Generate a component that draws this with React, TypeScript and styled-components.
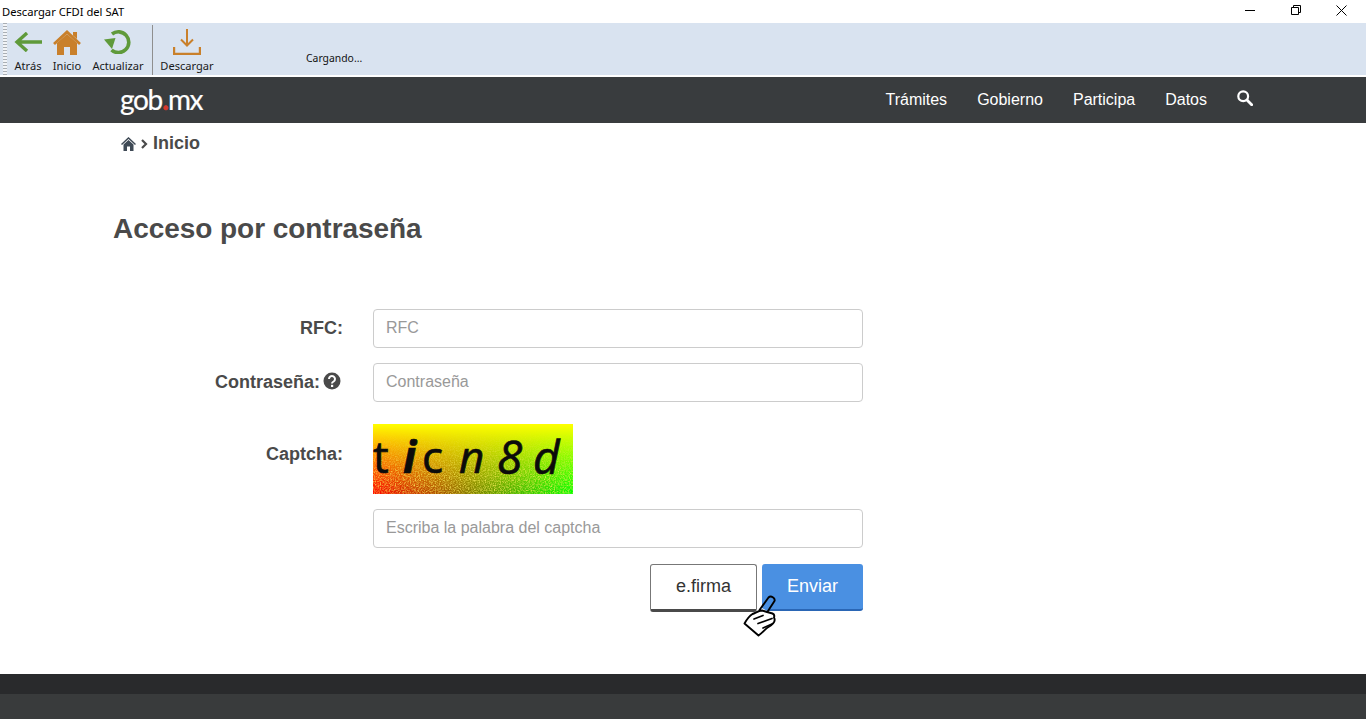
import React from "react";
import styled, { createGlobalStyle } from "styled-components";

const Global = createGlobalStyle`
  html, body { margin: 0; padding: 0; background: #fff; height: 100%; overflow: hidden; }
  #root { height: 719px; }
  * { box-sizing: border-box; }
`;

const Page = styled.div`
  width: 1366px;
  height: 719px;
  display: flex;
  flex-direction: column;
  font-family: "Liberation Sans", Arial, sans-serif;
  color: #4a4a4a;
  position: relative;
  overflow: hidden;
`;

const TitleBar = styled.div`
  height: 23px;
  flex: none;
  display: flex;
  align-items: center;
  justify-content: space-between;
  padding: 0 2px 0 2px;
  background: #fff;
`;
const TitleText = styled.span`
  font-family: "Noto Sans", "Open Sans", sans-serif;
  font-size: 11.2px;
  color: #000;
`;
const WinButtons = styled.div`
  display: flex;
  height: 23px;
`;
const WinButton = styled.div`
  width: 45.5px;
  height: 20px;
  display: flex;
  align-items: center;
  justify-content: center;
`;

const ToolBar = styled.div`
  height: 52px;
  flex: none;
  background: #d9e3f0;
  display: flex;
  padding-left: 3px;
`;
const Grip = styled.div`
  width: 4px;
  height: 52px;
  flex: none;
  background-image: repeating-linear-gradient(to bottom, #a9aeb4 0 1px, #f2f4f7 1px 3px);
`;
const ToolGroup = styled.div`
  display: flex;
  height: 52px;
`;
const ToolButton = styled.div<{ $w: number }>`
  width: ${(p) => p.$w}px;
  height: 52px;
  display: flex;
  flex-direction: column;
  align-items: center;
  padding-top: 5px;
`;
const ToolIcon = styled.div`
  height: 28px;
  display: flex;
  align-items: center;
  justify-content: center;
`;
const ToolLabel = styled.span`
  font-family: "Noto Sans", "Open Sans", sans-serif;
  font-size: 11.1px;
  line-height: 14px;
  color: #1a1a1a;
  margin-top: 3px;
  white-space: nowrap;
`;
const ToolSep = styled.div`
  width: 1px;
  height: 50px;
  margin: 2px 0 0 1px;
  background: #8f8f8f;
`;
const Loading = styled.div`
  font-family: "Noto Sans", "Open Sans", sans-serif;
  font-size: 10.4px;
  color: #111;
  margin: 27px 0 0 85px;
  line-height: 16px;
`;
const WhiteStrip = styled.div`
  height: 2px;
  flex: none;
  background: #fff;
`;

const Nav = styled.nav`
  height: 46px;
  flex: none;
  background: #393c3e;
  display: flex;
  align-items: center;
  justify-content: space-between;
  padding: 0 113px 0 120px;
`;
const Logo = styled.div`
  font-family: "Lato", "Open Sans", sans-serif;
  font-size: 28px;
  line-height: 46px;
  color: #fff;
  letter-spacing: -1.4px;
  -webkit-text-stroke: 0.2px;
  position: relative;
  top: -1px;
  display: flex;
`;
const LogoDot = styled.span`
  color: #d8392c;
  font-weight: 700;
  -webkit-text-stroke: 0.6px;
  margin: 0 0.5px;
`;
const NavLinks = styled.div`
  display: flex;
  align-items: center;
  gap: 30px;
`;
const NavLink = styled.span`
  font-size: 16px;
  color: #fff;
`;
const SearchIcon = styled.svg`
  margin-top: -5px;
`;

const Crumbs = styled.div`
  height: 41px;
  flex: none;
  padding-left: 121px;
  display: flex;
  align-items: center;
  gap: 5px;
  font-size: 18px;
  font-weight: 700;
  color: #4a4a4a;
`;

const Main = styled.main`
  flex: 1;
  padding: 0 0 0 113px;
  display: flex;
  flex-direction: column;
`;
const Heading = styled.h1`
  margin: 48px 0 0;
  font-size: 28px;
  line-height: 34px;
  font-weight: 700;
  letter-spacing: -0.05px;
  color: #4a4a4a;
`;
const Form = styled.div`
  margin-top: 63px;
  display: grid;
  grid-template-columns: 230px 490px;
  column-gap: 30px;
  align-items: start;
`;
const Label = styled.label<{ $mt?: number }>`
  display: flex;
  justify-content: flex-end;
  align-items: center;
  gap: 3px;
  height: 39px;
  font-size: 18px;
  font-weight: 700;
  color: #4a4a4a;
  margin-top: ${(p) => p.$mt ?? 0}px;
`;
const HelpIcon = styled.svg`
  margin: -4px 2px 0 0;
`;
const Input = styled.input<{ $mb?: number }>`
  width: 490px;
  height: 39px;
  border: 1px solid #ccc;
  border-radius: 4px;
  padding: 0 12px 2px;
  font: 16px "Liberation Sans", Arial, sans-serif;
  background: #fff;
  margin-bottom: ${(p) => p.$mb ?? 15}px;
  &::placeholder { color: #999; opacity: 1; }
`;
const CaptchaBox = styled.div`
  width: 200px;
  height: 70px;
  margin: 7px 0 15px;
  position: relative;
  overflow: hidden;
  background:
    linear-gradient(to bottom, #ffff00 0%, rgba(255,255,0,0) 100%),
    linear-gradient(to right, #ff0000 0%, #00ff00 100%);
`;
const CaptchaNoise = styled.svg`
  position: absolute;
  inset: 0;
  width: 100%;
  height: 100%;
`;
const CaptchaText = styled.div`
  position: absolute;
  inset: 0;
  font-family: "Open Sans", "Noto Sans", sans-serif;
  line-height: 70px;
  color: #0b0b0b;
  -webkit-text-stroke: 0.7px #0b0b0b;
`;
const CaptchaLetter = styled.span<{ $x: number; $weight?: number; $size?: number; $upright?: boolean }>`
  position: absolute;
  left: ${(p) => p.$x}px;
  top: -3px;
  font-style: ${(p) => (p.$upright ? "normal" : "italic")};
  font-weight: ${(p) => p.$weight ?? 400};
  font-size: ${(p) => p.$size ?? 44}px;
`;
const Buttons = styled.div`
  display: flex;
  justify-content: flex-end;
  gap: 5px;
  margin-top: 1px;
`;
const Button = styled.button<{ $primary?: boolean }>`
  height: ${(p) => (p.$primary ? 47 : 48)}px;
  width: ${(p) => (p.$primary ? 101 : 107)}px;
  border-radius: 3px;
  font: 18px "Liberation Sans", Arial, sans-serif;
  padding: 0 0 ${(p) => (p.$primary ? 0 : 1)}px;
  background: ${(p) => (p.$primary ? "#4a90e2" : "#fff")};
  color: ${(p) => (p.$primary ? "#fff" : "#333")};
  border: ${(p) => (p.$primary ? "0" : "1px solid #777")};
  border-bottom: ${(p) => (p.$primary ? "2px solid #2a66b5" : "3px solid #4a4a4a")};
`;
const HandCursor = styled.svg`
  position: absolute;
  left: 743px;
  top: 594px;
`;

const Footer = styled.footer`
  flex: none;
  height: 45px;
  display: flex;
  flex-direction: column;
`;
const FooterTop = styled.div`
  height: 20px;
  background: #292a2c;
`;
const FooterBottom = styled.div`
  flex: 1;
  background: #393b3c;
`;

const BackIcon = () => (
  <svg width="28" height="20" viewBox="0 0 28 20" fill="none" stroke="#5f9a3a" strokeWidth="3.4">
    <path d="M28 10H3.500M13 1L3 10l10 9" />
  </svg>
);
const HomeIcon = () => (
  <svg width="28" height="25" viewBox="0 0 28 25">
    <path fill="#c9802b" d="M4 13L14 4l10 9v12h-7v-8h-6v8H4z" />
    <path fill="none" stroke="#c9802b" strokeWidth="2.800" d="M1 14L14 2l13 12" />
    <path fill="#c9802b" d="M20 2h4v7l-4-3.500z" />
  </svg>
);
const RefreshIcon = () => (
  <svg width="28" height="24" viewBox="0 0 28 24" fill="none">
    <path stroke="#5f9a3a" strokeWidth="3.600" d="M8 4A10.400 10.400 0 1 1 7.500 20" />
    <path fill="#5f9a3a" d="M0 9.500L11.500 8 8 19z" />
  </svg>
);
const DownloadIcon = () => (
  <svg width="28" height="26" viewBox="0 0 28 26" fill="none" stroke="#c9802b" strokeWidth="2">
    <path d="M14 0v16M8 10.500l6 6 6-6" />
    <path d="M1 18v7h26v-7" strokeWidth="2.400" />
  </svg>
);

export default function App() {
  return (
    <Page>
      <Global />
      <TitleBar>
        <TitleText>Descargar CFDI del SAT</TitleText>
        <WinButtons>
          <WinButton>
            <svg width="10" height="10" viewBox="0 0 10 10"><path d="M0 5.500h10" stroke="#000" /></svg>
          </WinButton>
          <WinButton>
            <svg width="10" height="10" viewBox="0 0 10 10" fill="none" stroke="#000">
              <path d="M.5 2.500h7v7h-7z" /><path d="M2.500 2.500v-2h7v7h-2" />
            </svg>
          </WinButton>
          <WinButton>
            <svg width="11" height="11" viewBox="0 0 11 11" fill="none" stroke="#000"><path d="M.5.5l10 10M10.500.5l-10 10" /></svg>
          </WinButton>
        </WinButtons>
      </TitleBar>
      <ToolBar>
        <Grip />
        <ToolGroup>
          <ToolButton $w={42}><ToolIcon><BackIcon /></ToolIcon><ToolLabel>Atrás</ToolLabel></ToolButton>
          <ToolButton $w={36}><ToolIcon><HomeIcon /></ToolIcon><ToolLabel>Inicio</ToolLabel></ToolButton>
          <ToolButton $w={66}><ToolIcon><RefreshIcon /></ToolIcon><ToolLabel>Actualizar</ToolLabel></ToolButton>
        </ToolGroup>
        <ToolSep />
        <ToolButton $w={68}><ToolIcon><DownloadIcon /></ToolIcon><ToolLabel>Descargar</ToolLabel></ToolButton>
        <Loading>Cargando...</Loading>
      </ToolBar>
      <WhiteStrip />
      <Nav>
        <Logo>gob<LogoDot>.</LogoDot>mx</Logo>
        <NavLinks>
          <NavLink>Trámites</NavLink>
          <NavLink>Gobierno</NavLink>
          <NavLink>Participa</NavLink>
          <NavLink>Datos</NavLink>
          <SearchIcon width="16" height="16" viewBox="0 0 16 16" fill="none" stroke="#fff" strokeWidth="2.200">
            <circle cx="6.200" cy="6.200" r="4.900" />
            <path d="M10 10l4.700 4.700" strokeWidth="2.800" strokeLinecap="round" />
          </SearchIcon>
        </NavLinks>
      </Nav>
      <Crumbs>
        <svg width="15" height="14" viewBox="0 0 15 14">
          <path fill="#3f4a56" d="M2.500 7.500L7.500 3l5 4.500V14H9V9.500H6V14H2.500z" />
          <path fill="none" stroke="#3f4a56" strokeWidth="1.500" d="M.5 7.500L7.500 1l7 6.500" />
        </svg>
        <svg width="7" height="10" viewBox="0 0 7 10" fill="none" stroke="#4a4a4a" strokeWidth="2.200"><path d="M1 1l4 4-4 4" /></svg>
        <span>Inicio</span>
      </Crumbs>
      <Main>
        <Heading>Acceso por contraseña</Heading>
        <Form>
          <Label>RFC:</Label>
          <Input placeholder="RFC" readOnly />
          <Label>
            Contraseña:
            <HelpIcon width="18" height="18" viewBox="0 0 18 18">
              <circle cx="9" cy="9" r="8.500" fill="#4a4a4a" />
              <path d="M6 7a3 3 0 1 1 4.600 2.500c-1 .6-1.600 1-1.600 2" fill="none" stroke="#fff" strokeWidth="2" />
              <rect x="8" y="12.800" width="2.200" height="2.200" fill="#fff" />
            </HelpIcon>
          </Label>
          <Input placeholder="Contraseña" readOnly />
          <Label $mt={18}>Captcha:</Label>
          <CaptchaBox>
            <CaptchaNoise>
              <filter id="n">
                <feTurbulence type="fractalNoise" baseFrequency="0.8" numOctaves="2" seed="4" />
                <feColorMatrix values="0 0 0 0 0.95  0 0 0 0 0.85  0 0 0 0 0.1  1.8 0 0 0 -0.7" />
                <feGaussianBlur stdDeviation="0.35" />
              </filter>
              <linearGradient id="fade" x1="0" y1="0" x2="0" y2="1">
                <stop offset="0.1" stopColor="#fff" stopOpacity="0" />
                <stop offset="0.75" stopColor="#fff" stopOpacity="1" />
              </linearGradient>
              <mask id="m"><rect width="200" height="70" fill="url(#fade)" /></mask>
              <rect width="200" height="70" filter="url(#n)" mask="url(#m)" />
            </CaptchaNoise>
            <CaptchaText>
              <CaptchaLetter $x={0} $upright>t</CaptchaLetter>
              <CaptchaLetter $x={30} $weight={700}>i</CaptchaLetter>
              <CaptchaLetter $x={49} $upright>c</CaptchaLetter>
              <CaptchaLetter $x={86}>n</CaptchaLetter>
              <CaptchaLetter $x={124} $size={46}>8</CaptchaLetter>
              <CaptchaLetter $x={160} $size={46}>d</CaptchaLetter>
            </CaptchaText>
          </CaptchaBox>
          <span />
          <Input placeholder="Escriba la palabra del captcha" readOnly />
          <span />
          <Buttons>
            <Button>e.firma</Button>
            <Button $primary>Enviar</Button>
          </Buttons>
        </Form>
      </Main>
      <Footer>
        <FooterTop />
        <FooterBottom />
      </Footer>
      <HandCursor width="34" height="46" viewBox="0 0 34 46">
        <path fill="#4a90e2" stroke="#000" strokeWidth="1.900" strokeLinejoin="round" d="M16.500 16L25.500 3.500C28 1 32.500 4 31.500 7L24 18.500z" />
        <path fill="#fff" d="M19 14l5 3-2 3-5-2z" />
        <path fill="#fff" stroke="#000" strokeWidth="1.900" strokeLinejoin="round" d="M1.500 29.500C4 25 7 21.500 9.500 20c3-1 6-3.500 9.500-3.500l5 1.500 5.500 1.500c2 .8 2 2.500 1.500 4 1 2 .6 4.500-1 6-1.500 2-4 3.500-6 4.500-2.500 2-5 5-8.500 7.500z" />
        <path fill="none" stroke="#000" strokeWidth="1.700" strokeLinecap="round" d="M11 25l9-3.500M15 29.500l14-5M20 34l9-4" />
      </HandCursor>
    </Page>
  );
}
